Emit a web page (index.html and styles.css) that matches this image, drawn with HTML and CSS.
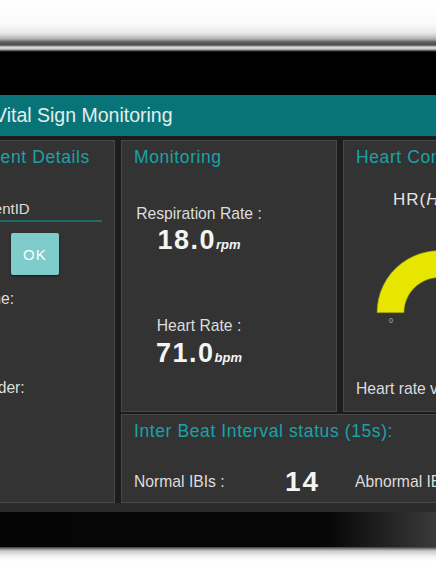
FILE: index.html
```html
<!DOCTYPE html>
<html>
<head>
<meta charset="utf-8">
<link rel="stylesheet" href="styles.css">
</head>
<body>
<div class="device">
  <div class="frame-top"></div>
  <div class="bezel-top"></div>
  <div class="screen">
    <header class="titlebar">Vital Sign Monitoring</header>
    <main class="grid">
      <section class="panel patient">
        <h2 class="panel-title">Patient Details</h2>
        <div class="field">PatientID</div>
        <button class="ok">OK</button>
        <p class="label name">Name:</p>
        <p class="label gender">Gender:</p>
      </section>
      <section class="panel monitoring">
        <h2 class="panel-title">Monitoring</h2>
        <div class="vitals">
          <p class="label resp">Respiration Rate :</p>
          <p class="reading">18.0<span class="unit">rpm</span></p>
          <p class="label heart">Heart Rate :</p>
          <p class="reading second">71.0<span class="unit">bpm</span></p>
        </div>
      </section>
      <section class="panel condition">
        <h2 class="panel-title">Heart Condition</h2>
        <p class="hr">HR(<i>Hz</i>)</p>
        <svg class="gauge" width="170" height="82" viewBox="0 0 170 82">
          <path d="M21 67.7 A62 62 0 0 1 145 67.7 L118 67.7 A35 35 0 0 0 48 67.7 Z" fill="#4a4a4a"/>
          <path d="M21 67.7 A62 62 0 0 1 100 8 L91 33.6 A35 35 0 0 0 48 67.7 Z" fill="#e6e600" stroke="#8a8a10" stroke-width="0.6"/>
          <text x="35" y="77.5" class="tick">0</text>
        </svg>
        <p class="label hrv">Heart rate variability</p>
      </section>
      <section class="panel ibi">
        <h2 class="panel-title">Inter Beat Interval status (15s):</h2>
        <div class="ibi-row">
          <span class="label">Normal IBIs :</span>
          <span class="count">14</span>
          <span class="label">Abnormal IBIs :</span>
          <span class="count">0</span>
        </div>
      </section>
    </main>
    <div class="screen-foot"></div>
  </div>
  <div class="bezel-bottom"></div>
  <div class="frame-bottom"></div>
</div>
</body>
</html>
```

FILE: styles.css
```css
html, body {
  margin: 0;
  padding: 0;
  background: #ffffff;
}
body {
  width: 436px;
  height: 581px;
  overflow: hidden;
  font-family: "Liberation Sans", Arial, sans-serif;
}
.device {
  width: 590px;
  margin-left: -50px;
  display: flex;
  flex-direction: column;
}
.frame-top {
  height: 52px;
  background: linear-gradient(#ffffff 0, #fbfbfb 24px, #e8e8e8 33px, #b0b0b0 39px, #5e5e5e 42px, #4a4a4a 45px, #d8d8d8 47px, #cdcdcd 49px, #3a3a3a 51px, #000000 52px);
}
.bezel-top {
  height: 43px;
  background: #000000;
}
.screen {
  background: #1c1c1c;
}
.titlebar {
  height: 41px;
  background: #087478;
  color: #e2eeee;
  font-size: 19.5px;
  line-height: 41px;
  padding-left: 44px;
}
.grid {
  display: grid;
  grid-template-columns: 160px 216px 192px;
  grid-template-rows: 272px 89px;
  column-gap: 6px;
  row-gap: 2px;
  padding: 4px 5px 0;
  background: #1c1c1c;
}
.panel {
  box-sizing: border-box;
  background: #333333;
  border: 1px solid #484848;
  padding: 6px 12px 0;
  overflow: hidden;
}
.patient {
  grid-row: 1 / 3;
}
.ibi {
  grid-column: 2 / 4;
}
.condition {
  padding-left: 12px;
}
.panel-title {
  margin: 0;
  font-size: 17.5px;
  letter-spacing: 0.6px;
  line-height: 21px;
  font-weight: normal;
  color: #19a3a7;
  white-space: nowrap;
}
.label {
  margin: 0;
  font-size: 15.7px;
  line-height: 18px;
  color: #dddddd;
  white-space: nowrap;
}
.field {
  margin-top: 32px;
  font-size: 15px;
  line-height: 18px;
  color: #dedede;
  padding-bottom: 2px;
  border-bottom: 2px solid #1d6a6e;
}
.ok {
  display: block;
  margin: 11px auto 0;
  width: 48px;
  height: 42px;
  border: none;
  border-radius: 2px;
  background: #7ecccb;
  color: #ffffff;
  font-family: "Liberation Sans", Arial, sans-serif;
  font-size: 15px;
  letter-spacing: 1.2px;
  box-shadow: 0 1px 2px rgba(0, 0, 0, 0.6);
  padding: 0;
}
.name {
  margin-top: 15px;
}
.gender {
  margin-top: 71px;
}
.vitals {
  width: 130px;
  text-align: center;
  margin-top: 37px;
}
.reading {
  margin: 2px 0 0;
  font-size: 27px;
  font-weight: bold;
  letter-spacing: 1.5px;
  line-height: 30px;
  color: #f4f4f4;
  white-space: nowrap;
}
.reading.second {
  margin-top: 3px;
}
.unit {
  font-size: 13px;
  font-style: italic;
  letter-spacing: 0;
  line-height: 0;
}
.heart {
  margin-top: 62px;
}
.hr {
  margin: 22px 0 0 37px;
  font-size: 17px;
  letter-spacing: 1px;
  line-height: 20px;
  color: #e4e4e4;
  white-space: nowrap;
}
.gauge {
  display: block;
  margin-top: 35px;
}
.tick {
  font-family: "Liberation Sans", Arial, sans-serif;
  font-size: 7px;
  fill: #bbbbbb;
  text-anchor: middle;
}
.hrv {
  margin-top: 53px;
}
.ibi-row {
  display: grid;
  grid-template-columns: 151px 70px auto 40px;
  align-items: center;
  margin-top: 24px;
}
.count {
  font-size: 28px;
  font-weight: bold;
  letter-spacing: 2px;
  line-height: 32px;
  color: #f4f4f4;
}
.screen-foot {
  height: 9px;
  background: #2b2b2b;
}
.bezel-bottom {
  height: 35px;
  background: linear-gradient(to right, #050505 0, #070707 380px, #3a3a3a 486px, #555555 590px);
}
.frame-bottom {
  height: 34px;
  background: linear-gradient(#3a3a3a 0, #8a8a8a 2px, #cccccc 4px, #d8d8d8 6px, #f2f2f2 9px, #ffffff 14px);
}
```
